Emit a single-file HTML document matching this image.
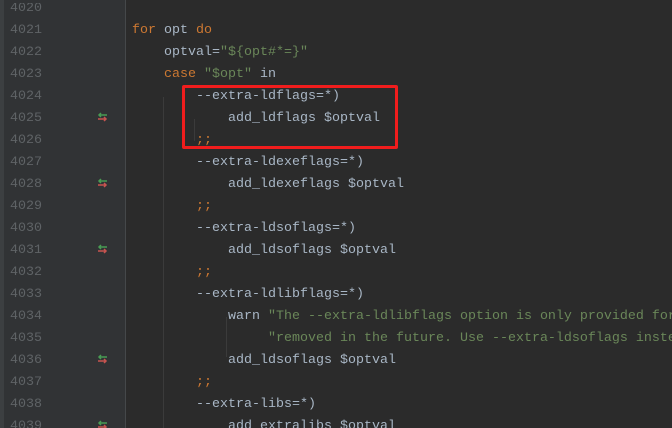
<!DOCTYPE html>
<html style="overflow:hidden"><head><style>
html,body{overflow:hidden;width:672px;height:428px}
body{margin:0;background:#2b2b2b;position:relative;font-family:"Liberation Mono",monospace;font-size:13.33px}
.strip{position:absolute;left:0;top:0;width:4px;height:428px;background:#3c3f41}
.gut{position:absolute;left:4px;top:0;width:121px;height:428px;background:#313335}
.sep{position:absolute;left:125px;top:0;width:1px;height:428px;background:#45484a}
.ln{position:absolute;left:10px;color:#5f6366;line-height:22px;height:22px}
.l{position:absolute;left:0;line-height:22px;height:22px;white-space:pre;color:#a9b7c6}
.k{color:#cc7832}.s{color:#6a8759}
.g{position:absolute;width:1px;background:#3b3b3b}
.ic{position:absolute;left:97px}
.box{position:absolute;left:182px;top:85px;width:210px;height:58px;border:3px solid #f01d1d;border-radius:2px}
#w{position:absolute;left:0;top:3px;width:672px;height:428px;overflow:hidden}
</style></head><body>
<div class="strip"></div><div class="gut"></div><div class="sep"></div>
<div id="w">
<div class="g" style="left:163px;top:94px;height:334px"></div>
<div class="g" style="left:194px;top:116px;height:22px"></div>
<div class="g" style="left:226px;top:314px;height:40px"></div>

<div class="ln" style="top:-5px">4020</div>
<div class="ln" style="top:17px">4021</div>
<div class="ln" style="top:39px">4022</div>
<div class="ln" style="top:61px">4023</div>
<div class="ln" style="top:83px">4024</div>
<div class="ln" style="top:105px">4025</div>
<div class="ln" style="top:127px">4026</div>
<div class="ln" style="top:149px">4027</div>
<div class="ln" style="top:171px">4028</div>
<div class="ln" style="top:193px">4029</div>
<div class="ln" style="top:215px">4030</div>
<div class="ln" style="top:237px">4031</div>
<div class="ln" style="top:259px">4032</div>
<div class="ln" style="top:281px">4033</div>
<div class="ln" style="top:303px">4034</div>
<div class="ln" style="top:325px">4035</div>
<div class="ln" style="top:347px">4036</div>
<div class="ln" style="top:369px">4037</div>
<div class="ln" style="top:391px">4038</div>
<div class="ln" style="top:413px">4039</div>

<svg class="ic" style="top:109px" width="12" height="10"><path d="M10 3H2M4 1L2 3L4 5" stroke="#499c54" stroke-width="1.5" fill="none"/><path d="M1 7H9M7 5L9 7L7 9" stroke="#c75450" stroke-width="1.5" fill="none"/></svg>
<svg class="ic" style="top:175px" width="12" height="10"><path d="M10 3H2M4 1L2 3L4 5" stroke="#499c54" stroke-width="1.5" fill="none"/><path d="M1 7H9M7 5L9 7L7 9" stroke="#c75450" stroke-width="1.5" fill="none"/></svg>
<svg class="ic" style="top:241px" width="12" height="10"><path d="M10 3H2M4 1L2 3L4 5" stroke="#499c54" stroke-width="1.5" fill="none"/><path d="M1 7H9M7 5L9 7L7 9" stroke="#c75450" stroke-width="1.5" fill="none"/></svg>
<svg class="ic" style="top:351px" width="12" height="10"><path d="M10 3H2M4 1L2 3L4 5" stroke="#499c54" stroke-width="1.5" fill="none"/><path d="M1 7H9M7 5L9 7L7 9" stroke="#c75450" stroke-width="1.5" fill="none"/></svg>
<svg class="ic" style="top:417px" width="12" height="10"><path d="M10 3H2M4 1L2 3L4 5" stroke="#499c54" stroke-width="1.5" fill="none"/><path d="M1 7H9M7 5L9 7L7 9" stroke="#c75450" stroke-width="1.5" fill="none"/></svg>

<div class="l" style="top:17px;left:132px"><span class="k">for</span> opt <span class="k">do</span></div>
<div class="l" style="top:39px;left:164px">optval=<span class="s">"${opt#*=}"</span></div>
<div class="l" style="top:61px;left:164px"><span class="k">case</span> <span class="s">"$opt"</span> in</div>
<div class="l" style="top:83px;left:196px">--extra-ldflags=*)</div>
<div class="l" style="top:105px;left:228px">add_ldflags $optval</div>
<div class="l" style="top:127px;left:196px"><span class="k">;;</span></div>
<div class="l" style="top:149px;left:196px">--extra-ldexeflags=*)</div>
<div class="l" style="top:171px;left:228px">add_ldexeflags $optval</div>
<div class="l" style="top:193px;left:196px"><span class="k">;;</span></div>
<div class="l" style="top:215px;left:196px">--extra-ldsoflags=*)</div>
<div class="l" style="top:237px;left:228px">add_ldsoflags $optval</div>
<div class="l" style="top:259px;left:196px"><span class="k">;;</span></div>
<div class="l" style="top:281px;left:196px">--extra-ldlibflags=*)</div>
<div class="l" style="top:303px;left:228px">warn <span class="s">"The --extra-ldlibflags option is only provided for</span></div>
<div class="l" style="top:325px;left:268px"><span class="s">"removed in the future. Use --extra-ldsoflags inste</span></div>
<div class="l" style="top:347px;left:228px">add_ldsoflags $optval</div>
<div class="l" style="top:369px;left:196px"><span class="k">;;</span></div>
<div class="l" style="top:391px;left:196px">--extra-libs=*)</div>
<div class="l" style="top:413px;left:228px">add_extralibs $optval</div>
</div>
<div class="box"></div>
</body></html>
